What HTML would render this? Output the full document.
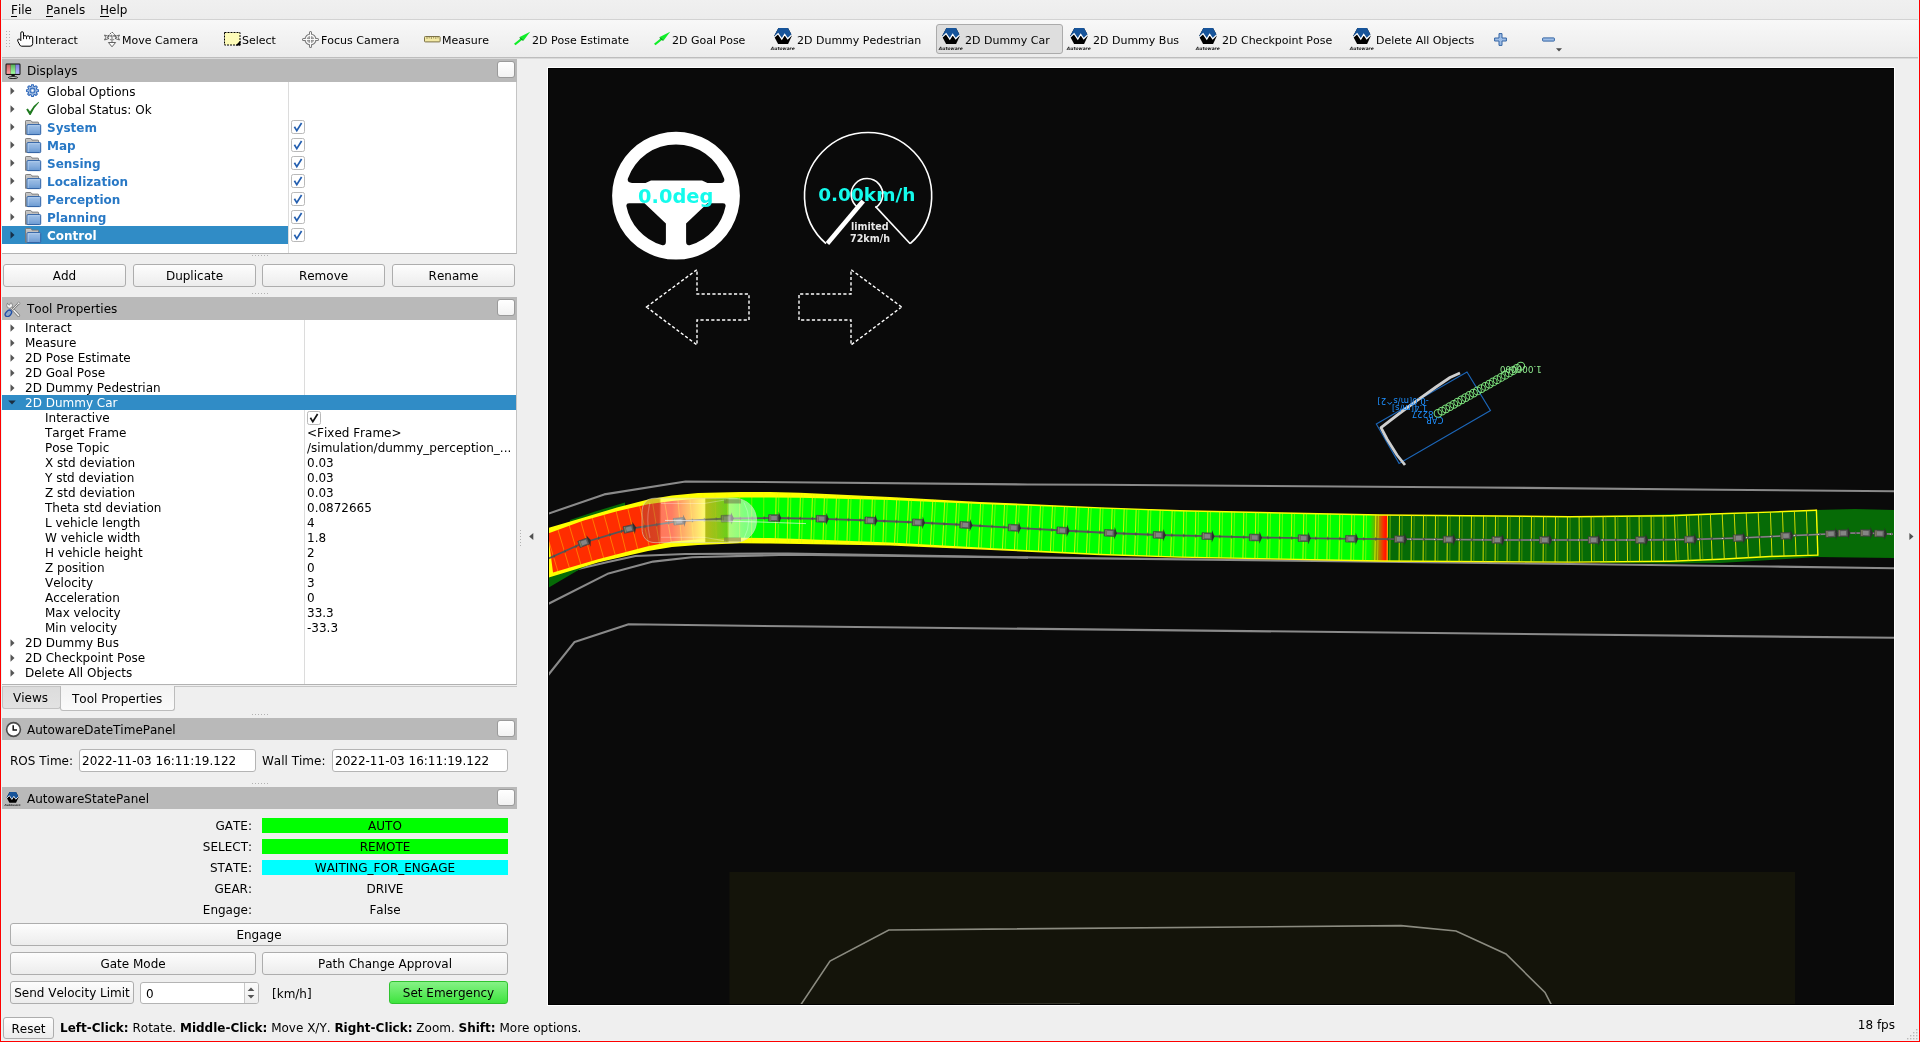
<!DOCTYPE html>
<html lang="en"><head><meta charset="utf-8"><title>RViz</title>
<style>
*{box-sizing:border-box;margin:0;padding:0}
html,body{width:1920px;height:1042px;overflow:hidden}
body{position:relative;background:#efefef;font-family:"DejaVu Sans","Liberation Sans",sans-serif;font-size:12px;font-kerning:none;color:#000;line-height:15px}
.abs,.abs>*{position:absolute}
#root{position:absolute;left:0;top:0;width:1920px;height:1042px;overflow:hidden;will-change:transform}
#root div,#root span,#root svg{position:absolute;white-space:nowrap}
.t{height:15px;line-height:15px}
.btn{border:1px solid #adadad;border-radius:3px;background:linear-gradient(#fdfdfd,#ececec);text-align:center}
.title{background:#b9b9b9;height:23px}
.float{width:17px;height:17px;border:1px solid #9a9a9a;border-radius:3px;background:linear-gradient(#ffffff,#f2f2f2)}
.tree{background:#fff;border-right:1px solid #c4c4c4;border-bottom:1px solid #b2b2b2}
.bold{font-weight:bold}
.tb{font-size:11px}
.blue{color:#2878c5}
.cb{width:13px;height:13px;border:1px solid #b5b5b5;border-radius:2px;background:#fff}
.inp{background:#fff;border:1px solid #b4b4b4;border-radius:3px}
.grip{width:16px;height:1px;background-image:repeating-linear-gradient(90deg,#b2b2b2 0 1px,transparent 1px 3px)}
</style></head><body><div id="root">
<div class="" style="left:0px;top:0px;width:1920px;height:20px;background:linear-gradient(#f0f0f0,#ececec);border-bottom:1px solid #d2d2d2"></div>
<div class="t" style="left:11px;top:3px;">File</div>
<div class="" style="left:11px;top:16px;width:6px;height:1px;background:#000"></div>
<div class="t" style="left:46px;top:3px;">Panels</div>
<div class="" style="left:46px;top:16px;width:7px;height:1px;background:#000"></div>
<div class="t" style="left:100px;top:3px;">Help</div>
<div class="" style="left:100px;top:16px;width:9px;height:1px;background:#000"></div>
<div class="" style="left:0px;top:20px;width:1920px;height:38px;background:linear-gradient(#f8f8f8,#ececec);border-bottom:1px solid #bdbdbd"></div>
<div class="" style="left:0px;top:58px;width:1920px;height:1px;background:#dadada"></div>
<div class="" style="left:5px;top:30px;width:6px;height:18px;background-image:radial-gradient(circle at 1.5px 1.5px,#b4b4b4 0.7px,transparent 1px);background-size:3px 3px"></div>
<div class="" style="left:936px;top:24px;width:127px;height:30px;background:#dedede;border:1px solid #ababab;border-radius:3px"></div>
<div class="t tb" style="left:35px;top:33px;">Interact</div>
<div class="t tb" style="left:122px;top:33px;">Move Camera</div>
<div class="t tb" style="left:242px;top:33px;">Select</div>
<div class="t tb" style="left:321px;top:33px;">Focus Camera</div>
<div class="t tb" style="left:442px;top:33px;">Measure</div>
<div class="t tb" style="left:532px;top:33px;">2D Pose Estimate</div>
<div class="t tb" style="left:672px;top:33px;">2D Goal Pose</div>
<div class="t tb" style="left:797px;top:33px;">2D Dummy Pedestrian</div>
<div class="t tb" style="left:965px;top:33px;">2D Dummy Car</div>
<div class="t tb" style="left:1093px;top:33px;">2D Dummy Bus</div>
<div class="t tb" style="left:1222px;top:33px;">2D Checkpoint Pose</div>
<div class="t tb" style="left:1376px;top:33px;">Delete All Objects</div>
<svg style="left:16px;top:30px" width="18" height="18" viewBox="-1 -1 18 18"><path d="M3.8 9.6 V1.8 Q3.8 0.8 5.15 0.8 Q6.5 0.8 6.5 1.8 V5.2 Q6.6 4.7 8 4.7 Q9.5 4.7 9.5 5.6 Q9.6 4.9 11 4.9 Q12.6 4.9 12.6 6 Q12.7 5.3 14.1 5.3 Q15.7 5.3 15.7 6.8 V12.5 Q15.7 15.2 13.2 15.2 H4.7 Q3.4 15.2 2.8 14 L0.9 10.3 Q0.2 8.6 1.4 8 Q2.7 7.5 3.8 9.6 Z" fill="#fff" stroke="#000" stroke-width="1" stroke-linejoin="round"/><path d="M6.5 5.2 V8.2 M9.5 5.6 V8.2 M12.6 6 V8.2" stroke="#000" stroke-width="0.9" fill="none"/></svg>
<svg style="left:104px;top:31px" width="17" height="17" viewBox="0 0 17 17"><g stroke="#5a5a5a" stroke-width="0.95" stroke-linejoin="miter"><rect x="7" y="5" width="2" height="7" fill="#b4b4b4" stroke="none"/><path d="M8 1 L12 5 H4 Z" fill="#fdfdfd" stroke-dasharray="2.4 0.8"/><path d="M0.5 4 L4.8 5.5 L3.5 6.5 L4.8 7.5 L0.5 9 L1.8 6.5 Z" fill="#fdfdfd"/><path d="M15.5 4 L11.2 5.5 L12.5 6.5 L11.2 7.5 L15.5 9 L14.2 6.5 Z" fill="#fdfdfd"/><ellipse cx="8" cy="6.5" rx="4" ry="2.3" fill="none" stroke-width="0.9" stroke-dasharray="1.6 1.1"/><path d="M4.4 11.5 H11.6 L8 15.8 Z" fill="#fdfdfd"/></g></svg>
<svg style="left:224px;top:32px" width="17" height="14" viewBox="0 0 17 14"><rect x="0.5" y="0.5" width="15.5" height="12.5" fill="#fdfbb8" stroke="#000" stroke-width="1" stroke-dasharray="2 1"/><path d="M16.5 8.6 V13.5 H11.6 Z" fill="#000"/></svg>
<svg style="left:301px;top:30px" width="19" height="19" viewBox="-9.5 -9.5 19 19"><path d="M0 -7 V7 M-7 0 H7" stroke="#787878" stroke-width="3" stroke-linecap="round" fill="none"/><circle r="5.5" fill="#f6f6f6" stroke="#787878" stroke-width="1.1"/><circle r="3.3" fill="#6e6e6e"/><path d="M0 -7.4 V7.4 M-7.4 0 H7.4" stroke="#fafafa" stroke-width="1" fill="none"/><path d="M-1.7 -3 V3 M1.7 -3 V3 M-3 -1.7 H3 M-3 1.7 H3" stroke="#d8d8d8" stroke-width="0.5" fill="none"/></svg>
<svg style="left:424px;top:36px" width="17" height="7" viewBox="0 0 17 7"><rect x="0.5" y="0.5" width="15.6" height="5.4" rx="0.8" fill="#f3e9a4" stroke="#7c7248" stroke-width="1"/><path d="M3 1 V3 M5.2 1 V2.4 M7.4 1 V3 M9.6 1 V2.4 M11.8 1 V3 M14 1 V2.4" stroke="#7c7248" stroke-width="0.7"/></svg>
<svg style="left:514px;top:31px" width="18" height="17" viewBox="0 0 18 17"><path d="M0 12.8 L1.5 14.3 L8.3 8.7 L9.6 9.4 L16.2 0.8 L5.7 6.1 L6.8 7.2 Z" fill="#10ee28"/><path d="M5.7 6.1 L9.6 9.4 L8.8 9.8 L5.6 7 Z" fill="#0a7a18"/></svg>
<svg style="left:654px;top:31px" width="18" height="17" viewBox="0 0 18 17"><path d="M0 12.8 L1.5 14.3 L8.3 8.7 L9.6 9.4 L16.2 0.8 L5.7 6.1 L6.8 7.2 Z" fill="#10ee28"/><path d="M5.7 6.1 L9.6 9.4 L8.8 9.8 L5.6 7 Z" fill="#0a7a18"/></svg>
<svg style="left:770.00px;top:28px" width="26.00" height="24" viewBox="-2 0 26 24"><path d="M6.4 0 H16 L20 7.4 L16.1 16 H6.1 L2 8.3 Z" fill="#000"/><path d="M6.4 0 H16 L20 7.4 L19.7 6.9 L15.7 10.9 L12.7 6.6 L9.8 11.2 L6.1 5.7 L2.3 9 L2 8.3 Z" fill="#17549a"/><path d="M2 9.4 L6.1 5.6 L9.8 11.1 L12.7 6.5 L15.7 10.8 L20 6.6" fill="none" stroke="#fff" stroke-width="1.25" stroke-linejoin="miter"/><text x="-1.2" y="21.7" font-family="DejaVu Sans,Liberation Sans,sans-serif" font-style="italic" font-weight="bold" font-size="4.4" textLength="24" lengthAdjust="spacingAndGlyphs" fill="#1a1a1a">Autoware</text></svg>
<svg style="left:938.00px;top:28px" width="26.00" height="24" viewBox="-2 0 26 24"><path d="M6.4 0 H16 L20 7.4 L16.1 16 H6.1 L2 8.3 Z" fill="#000"/><path d="M6.4 0 H16 L20 7.4 L19.7 6.9 L15.7 10.9 L12.7 6.6 L9.8 11.2 L6.1 5.7 L2.3 9 L2 8.3 Z" fill="#17549a"/><path d="M2 9.4 L6.1 5.6 L9.8 11.1 L12.7 6.5 L15.7 10.8 L20 6.6" fill="none" stroke="#fff" stroke-width="1.25" stroke-linejoin="miter"/><text x="-1.2" y="21.7" font-family="DejaVu Sans,Liberation Sans,sans-serif" font-style="italic" font-weight="bold" font-size="4.4" textLength="24" lengthAdjust="spacingAndGlyphs" fill="#1a1a1a">Autoware</text></svg>
<svg style="left:1066.00px;top:28px" width="26.00" height="24" viewBox="-2 0 26 24"><path d="M6.4 0 H16 L20 7.4 L16.1 16 H6.1 L2 8.3 Z" fill="#000"/><path d="M6.4 0 H16 L20 7.4 L19.7 6.9 L15.7 10.9 L12.7 6.6 L9.8 11.2 L6.1 5.7 L2.3 9 L2 8.3 Z" fill="#17549a"/><path d="M2 9.4 L6.1 5.6 L9.8 11.1 L12.7 6.5 L15.7 10.8 L20 6.6" fill="none" stroke="#fff" stroke-width="1.25" stroke-linejoin="miter"/><text x="-1.2" y="21.7" font-family="DejaVu Sans,Liberation Sans,sans-serif" font-style="italic" font-weight="bold" font-size="4.4" textLength="24" lengthAdjust="spacingAndGlyphs" fill="#1a1a1a">Autoware</text></svg>
<svg style="left:1195.00px;top:28px" width="26.00" height="24" viewBox="-2 0 26 24"><path d="M6.4 0 H16 L20 7.4 L16.1 16 H6.1 L2 8.3 Z" fill="#000"/><path d="M6.4 0 H16 L20 7.4 L19.7 6.9 L15.7 10.9 L12.7 6.6 L9.8 11.2 L6.1 5.7 L2.3 9 L2 8.3 Z" fill="#17549a"/><path d="M2 9.4 L6.1 5.6 L9.8 11.1 L12.7 6.5 L15.7 10.8 L20 6.6" fill="none" stroke="#fff" stroke-width="1.25" stroke-linejoin="miter"/><text x="-1.2" y="21.7" font-family="DejaVu Sans,Liberation Sans,sans-serif" font-style="italic" font-weight="bold" font-size="4.4" textLength="24" lengthAdjust="spacingAndGlyphs" fill="#1a1a1a">Autoware</text></svg>
<svg style="left:1349.00px;top:28px" width="26.00" height="24" viewBox="-2 0 26 24"><path d="M6.4 0 H16 L20 7.4 L16.1 16 H6.1 L2 8.3 Z" fill="#000"/><path d="M6.4 0 H16 L20 7.4 L19.7 6.9 L15.7 10.9 L12.7 6.6 L9.8 11.2 L6.1 5.7 L2.3 9 L2 8.3 Z" fill="#17549a"/><path d="M2 9.4 L6.1 5.6 L9.8 11.1 L12.7 6.5 L15.7 10.8 L20 6.6" fill="none" stroke="#fff" stroke-width="1.25" stroke-linejoin="miter"/><text x="-1.2" y="21.7" font-family="DejaVu Sans,Liberation Sans,sans-serif" font-style="italic" font-weight="bold" font-size="4.4" textLength="24" lengthAdjust="spacingAndGlyphs" fill="#1a1a1a">Autoware</text></svg>
<svg style="left:1494px;top:33px" width="13" height="13" viewBox="0 0 13 13"><path d="M5 0.6 H8 V5 H12.4 V8 H8 V12.4 H5 V8 H0.6 V5 H5 Z" fill="#9dbde6" stroke="#3465a4" stroke-width="1" stroke-linejoin="round"/></svg>
<svg style="left:1542px;top:37px" width="13" height="5" viewBox="0 0 13 5"><rect x="0.6" y="0.9" width="11.8" height="3.2" rx="0.6" fill="#9dbde6" stroke="#3465a4" stroke-width="1"/></svg>
<svg style="left:1556px;top:48px" width="6" height="4" viewBox="0 0 6 4"><path d="M0 0.3 H6 L3 3.6 Z" fill="#4a4a4a"/></svg>
<div class="title" style="left:2px;top:59px;width:515px;height:23px;"></div>
<svg style="left:5px;top:63px" width="16" height="16" viewBox="0 0 16 16"><defs><linearGradient id="mr" x1="0" y1="0" x2="0" y2="1"><stop offset="0" stop-color="#c46060"/><stop offset="1" stop-color="#ffa0a0"/></linearGradient><linearGradient id="mg" x1="0" y1="0" x2="0" y2="1"><stop offset="0" stop-color="#58b058"/><stop offset="1" stop-color="#a4ffa4"/></linearGradient><linearGradient id="mb" x1="0" y1="0" x2="0" y2="1"><stop offset="0" stop-color="#7c7cdc"/><stop offset="1" stop-color="#b8b8ff"/></linearGradient></defs><rect x="0.5" y="0.5" width="15" height="11.4" rx="1.2" fill="#111"/><rect x="1.5" y="1.5" width="4.2" height="9.4" fill="url(#mr)"/><rect x="5.7" y="1.5" width="4.8" height="9.4" fill="url(#mg)"/><rect x="10.5" y="1.5" width="4" height="9.4" fill="url(#mb)"/><path d="M6.6 11.9 H9.6 L10 13.2 H6.2 Z" fill="#111"/><ellipse cx="8" cy="14.6" rx="4.6" ry="1" fill="#ddd" stroke="#111" stroke-width="0.9"/></svg>
<div class="t" style="left:27px;top:64px;">Displays</div>
<div class="float" style="left:497px;top:61px;width:18px;height:17px;"></div>
<div class="tree" style="left:2px;top:82px;width:515px;height:172px;"></div>
<div class="" style="left:288px;top:82px;width:1px;height:171px;background:#dcdcdc"></div>
<svg style="left:10px;top:87px" width="5" height="8" viewBox="0 0 5 8"><path d="M0.5 0.3 L4.5 4 L0.5 7.7 Z" fill="#555"/></svg>
<svg style="left:25px;top:83px" width="15" height="15" viewBox="-7.5 -7.6 15 15"><path d="M-1.20 -4.34 L-0.93 -5.93 L0.93 -5.93 L1.20 -4.34 L2.22 -3.92 L3.54 -4.85 L4.85 -3.54 L3.92 -2.22 L4.34 -1.20 L5.93 -0.93 L5.93 0.93 L4.34 1.20 L3.92 2.22 L4.85 3.54 L3.54 4.85 L2.22 3.92 L1.20 4.34 L0.93 5.93 L-0.93 5.93 L-1.20 4.34 L-2.22 3.92 L-3.54 4.85 L-4.85 3.54 L-3.92 2.22 L-4.34 1.20 L-5.93 0.93 L-5.93 -0.93 L-4.34 -1.20 L-3.92 -2.22 L-4.85 -3.54 L-3.54 -4.85 L-2.22 -3.92 Z" fill="#aac3e4" stroke="#2c66ba" stroke-width="1.05" stroke-linejoin="round"/><circle r="2.45" fill="#9ab8e0" stroke="#3a72c0" stroke-width="1.1"/><circle r="1.05" fill="#fff"/></svg>
<div class="t" style="left:47px;top:85px;">Global Options</div>
<svg style="left:10px;top:105px" width="5" height="8" viewBox="0 0 5 8"><path d="M0.5 0.3 L4.5 4 L0.5 7.7 Z" fill="#555"/></svg>
<svg style="left:25px;top:101px" width="15" height="15" viewBox="0 0 15 15"><path d="M1.2 8.6 L2.8 7.4 L5 10.4 Q8 4.6 13.6 0.8 L14 1.6 Q9 6.6 5.6 14 H4.6 Z" fill="#1f7a1f"/></svg>
<div class="t" style="left:47px;top:103px;">Global Status: Ok</div>
<svg style="left:10px;top:123px" width="5" height="8" viewBox="0 0 5 8"><path d="M0.5 0.3 L4.5 4 L0.5 7.7 Z" fill="#555"/></svg>
<svg style="left:25px;top:120px" width="17" height="16" viewBox="0 0 17 16"><defs><linearGradient id="fb" x1="0" y1="0" x2="0" y2="1"><stop offset="0" stop-color="#c8c8c8"/><stop offset="1" stop-color="#a2a2a2"/></linearGradient><linearGradient id="fg" x1="0" y1="0" x2="0" y2="1"><stop offset="0" stop-color="#9fc0e6"/><stop offset="0.5" stop-color="#8ab0de"/><stop offset="1" stop-color="#6a9ad2"/></linearGradient></defs><path d="M0.5 14.3 V1.2 Q0.5 0.5 1.2 0.5 H5.4 Q6.2 0.5 6.5 1.2 L6.9 2.1 H12.8 Q13.6 2.1 13.6 2.9 V14.3 Z" fill="url(#fb)" stroke="#777" stroke-width="0.9"/><rect x="2" y="4.6" width="13.7" height="10" rx="0.9" fill="url(#fg)" stroke="#2f62a6" stroke-width="1"/><path d="M3.1 14 V5.7 H14.6" fill="none" stroke="#c4daf2" stroke-opacity="0.8" stroke-width="0.8"/></svg>
<svg style="left:291px;top:120px" width="14" height="14" viewBox="0 0 14 14"><rect x="0.5" y="0.5" width="13" height="13" rx="1.8" fill="#fff" stroke="#b9b9b9"/><path d="M3.4 6.8 L5.8 10.6 L10.6 3" fill="none" stroke="#245fb0" stroke-width="1.7"/></svg>
<div class="t bold blue" style="left:47px;top:121px;">System</div>
<svg style="left:10px;top:141px" width="5" height="8" viewBox="0 0 5 8"><path d="M0.5 0.3 L4.5 4 L0.5 7.7 Z" fill="#555"/></svg>
<svg style="left:25px;top:138px" width="17" height="16" viewBox="0 0 17 16"><defs><linearGradient id="fb" x1="0" y1="0" x2="0" y2="1"><stop offset="0" stop-color="#c8c8c8"/><stop offset="1" stop-color="#a2a2a2"/></linearGradient><linearGradient id="fg" x1="0" y1="0" x2="0" y2="1"><stop offset="0" stop-color="#9fc0e6"/><stop offset="0.5" stop-color="#8ab0de"/><stop offset="1" stop-color="#6a9ad2"/></linearGradient></defs><path d="M0.5 14.3 V1.2 Q0.5 0.5 1.2 0.5 H5.4 Q6.2 0.5 6.5 1.2 L6.9 2.1 H12.8 Q13.6 2.1 13.6 2.9 V14.3 Z" fill="url(#fb)" stroke="#777" stroke-width="0.9"/><rect x="2" y="4.6" width="13.7" height="10" rx="0.9" fill="url(#fg)" stroke="#2f62a6" stroke-width="1"/><path d="M3.1 14 V5.7 H14.6" fill="none" stroke="#c4daf2" stroke-opacity="0.8" stroke-width="0.8"/></svg>
<svg style="left:291px;top:138px" width="14" height="14" viewBox="0 0 14 14"><rect x="0.5" y="0.5" width="13" height="13" rx="1.8" fill="#fff" stroke="#b9b9b9"/><path d="M3.4 6.8 L5.8 10.6 L10.6 3" fill="none" stroke="#245fb0" stroke-width="1.7"/></svg>
<div class="t bold blue" style="left:47px;top:139px;">Map</div>
<svg style="left:10px;top:159px" width="5" height="8" viewBox="0 0 5 8"><path d="M0.5 0.3 L4.5 4 L0.5 7.7 Z" fill="#555"/></svg>
<svg style="left:25px;top:156px" width="17" height="16" viewBox="0 0 17 16"><defs><linearGradient id="fb" x1="0" y1="0" x2="0" y2="1"><stop offset="0" stop-color="#c8c8c8"/><stop offset="1" stop-color="#a2a2a2"/></linearGradient><linearGradient id="fg" x1="0" y1="0" x2="0" y2="1"><stop offset="0" stop-color="#9fc0e6"/><stop offset="0.5" stop-color="#8ab0de"/><stop offset="1" stop-color="#6a9ad2"/></linearGradient></defs><path d="M0.5 14.3 V1.2 Q0.5 0.5 1.2 0.5 H5.4 Q6.2 0.5 6.5 1.2 L6.9 2.1 H12.8 Q13.6 2.1 13.6 2.9 V14.3 Z" fill="url(#fb)" stroke="#777" stroke-width="0.9"/><rect x="2" y="4.6" width="13.7" height="10" rx="0.9" fill="url(#fg)" stroke="#2f62a6" stroke-width="1"/><path d="M3.1 14 V5.7 H14.6" fill="none" stroke="#c4daf2" stroke-opacity="0.8" stroke-width="0.8"/></svg>
<svg style="left:291px;top:156px" width="14" height="14" viewBox="0 0 14 14"><rect x="0.5" y="0.5" width="13" height="13" rx="1.8" fill="#fff" stroke="#b9b9b9"/><path d="M3.4 6.8 L5.8 10.6 L10.6 3" fill="none" stroke="#245fb0" stroke-width="1.7"/></svg>
<div class="t bold blue" style="left:47px;top:157px;">Sensing</div>
<svg style="left:10px;top:177px" width="5" height="8" viewBox="0 0 5 8"><path d="M0.5 0.3 L4.5 4 L0.5 7.7 Z" fill="#555"/></svg>
<svg style="left:25px;top:174px" width="17" height="16" viewBox="0 0 17 16"><defs><linearGradient id="fb" x1="0" y1="0" x2="0" y2="1"><stop offset="0" stop-color="#c8c8c8"/><stop offset="1" stop-color="#a2a2a2"/></linearGradient><linearGradient id="fg" x1="0" y1="0" x2="0" y2="1"><stop offset="0" stop-color="#9fc0e6"/><stop offset="0.5" stop-color="#8ab0de"/><stop offset="1" stop-color="#6a9ad2"/></linearGradient></defs><path d="M0.5 14.3 V1.2 Q0.5 0.5 1.2 0.5 H5.4 Q6.2 0.5 6.5 1.2 L6.9 2.1 H12.8 Q13.6 2.1 13.6 2.9 V14.3 Z" fill="url(#fb)" stroke="#777" stroke-width="0.9"/><rect x="2" y="4.6" width="13.7" height="10" rx="0.9" fill="url(#fg)" stroke="#2f62a6" stroke-width="1"/><path d="M3.1 14 V5.7 H14.6" fill="none" stroke="#c4daf2" stroke-opacity="0.8" stroke-width="0.8"/></svg>
<svg style="left:291px;top:174px" width="14" height="14" viewBox="0 0 14 14"><rect x="0.5" y="0.5" width="13" height="13" rx="1.8" fill="#fff" stroke="#b9b9b9"/><path d="M3.4 6.8 L5.8 10.6 L10.6 3" fill="none" stroke="#245fb0" stroke-width="1.7"/></svg>
<div class="t bold blue" style="left:47px;top:175px;">Localization</div>
<svg style="left:10px;top:195px" width="5" height="8" viewBox="0 0 5 8"><path d="M0.5 0.3 L4.5 4 L0.5 7.7 Z" fill="#555"/></svg>
<svg style="left:25px;top:192px" width="17" height="16" viewBox="0 0 17 16"><defs><linearGradient id="fb" x1="0" y1="0" x2="0" y2="1"><stop offset="0" stop-color="#c8c8c8"/><stop offset="1" stop-color="#a2a2a2"/></linearGradient><linearGradient id="fg" x1="0" y1="0" x2="0" y2="1"><stop offset="0" stop-color="#9fc0e6"/><stop offset="0.5" stop-color="#8ab0de"/><stop offset="1" stop-color="#6a9ad2"/></linearGradient></defs><path d="M0.5 14.3 V1.2 Q0.5 0.5 1.2 0.5 H5.4 Q6.2 0.5 6.5 1.2 L6.9 2.1 H12.8 Q13.6 2.1 13.6 2.9 V14.3 Z" fill="url(#fb)" stroke="#777" stroke-width="0.9"/><rect x="2" y="4.6" width="13.7" height="10" rx="0.9" fill="url(#fg)" stroke="#2f62a6" stroke-width="1"/><path d="M3.1 14 V5.7 H14.6" fill="none" stroke="#c4daf2" stroke-opacity="0.8" stroke-width="0.8"/></svg>
<svg style="left:291px;top:192px" width="14" height="14" viewBox="0 0 14 14"><rect x="0.5" y="0.5" width="13" height="13" rx="1.8" fill="#fff" stroke="#b9b9b9"/><path d="M3.4 6.8 L5.8 10.6 L10.6 3" fill="none" stroke="#245fb0" stroke-width="1.7"/></svg>
<div class="t bold blue" style="left:47px;top:193px;">Perception</div>
<svg style="left:10px;top:213px" width="5" height="8" viewBox="0 0 5 8"><path d="M0.5 0.3 L4.5 4 L0.5 7.7 Z" fill="#555"/></svg>
<svg style="left:25px;top:210px" width="17" height="16" viewBox="0 0 17 16"><defs><linearGradient id="fb" x1="0" y1="0" x2="0" y2="1"><stop offset="0" stop-color="#c8c8c8"/><stop offset="1" stop-color="#a2a2a2"/></linearGradient><linearGradient id="fg" x1="0" y1="0" x2="0" y2="1"><stop offset="0" stop-color="#9fc0e6"/><stop offset="0.5" stop-color="#8ab0de"/><stop offset="1" stop-color="#6a9ad2"/></linearGradient></defs><path d="M0.5 14.3 V1.2 Q0.5 0.5 1.2 0.5 H5.4 Q6.2 0.5 6.5 1.2 L6.9 2.1 H12.8 Q13.6 2.1 13.6 2.9 V14.3 Z" fill="url(#fb)" stroke="#777" stroke-width="0.9"/><rect x="2" y="4.6" width="13.7" height="10" rx="0.9" fill="url(#fg)" stroke="#2f62a6" stroke-width="1"/><path d="M3.1 14 V5.7 H14.6" fill="none" stroke="#c4daf2" stroke-opacity="0.8" stroke-width="0.8"/></svg>
<svg style="left:291px;top:210px" width="14" height="14" viewBox="0 0 14 14"><rect x="0.5" y="0.5" width="13" height="13" rx="1.8" fill="#fff" stroke="#b9b9b9"/><path d="M3.4 6.8 L5.8 10.6 L10.6 3" fill="none" stroke="#245fb0" stroke-width="1.7"/></svg>
<div class="t bold blue" style="left:47px;top:211px;">Planning</div>
<div class="" style="left:2px;top:226px;width:286px;height:18px;background:#308cc6"></div>
<svg style="left:10px;top:231px" width="5" height="8" viewBox="0 0 5 8"><path d="M0.5 0.3 L4.5 4 L0.5 7.7 Z" fill="#16304a"/></svg>
<svg style="left:25px;top:228px" width="17" height="16" viewBox="0 0 17 16"><defs><linearGradient id="fb" x1="0" y1="0" x2="0" y2="1"><stop offset="0" stop-color="#c8c8c8"/><stop offset="1" stop-color="#a2a2a2"/></linearGradient><linearGradient id="fg" x1="0" y1="0" x2="0" y2="1"><stop offset="0" stop-color="#9fc0e6"/><stop offset="0.5" stop-color="#8ab0de"/><stop offset="1" stop-color="#6a9ad2"/></linearGradient></defs><path d="M0.5 14.3 V1.2 Q0.5 0.5 1.2 0.5 H5.4 Q6.2 0.5 6.5 1.2 L6.9 2.1 H12.8 Q13.6 2.1 13.6 2.9 V14.3 Z" fill="url(#fb)" stroke="#777" stroke-width="0.9"/><rect x="2" y="4.6" width="13.7" height="10" rx="0.9" fill="url(#fg)" stroke="#2f62a6" stroke-width="1"/><path d="M3.1 14 V5.7 H14.6" fill="none" stroke="#c4daf2" stroke-opacity="0.8" stroke-width="0.8"/></svg>
<svg style="left:291px;top:228px" width="14" height="14" viewBox="0 0 14 14"><rect x="0.5" y="0.5" width="13" height="13" rx="1.8" fill="#fff" stroke="#b9b9b9"/><path d="M3.4 6.8 L5.8 10.6 L10.6 3" fill="none" stroke="#245fb0" stroke-width="1.7"/></svg>
<div class="t bold" style="left:47px;top:229px;color:#fff">Control</div>
<div class="grip" style="left:252px;top:255px;width:16px;height:1px;"></div>
<div class="btn" style="left:3px;top:264px;width:123px;height:23px;"></div>
<div class="t" style="left:3px;width:123px;text-align:center;top:269px;">Add</div>
<div class="btn" style="left:133px;top:264px;width:123px;height:23px;"></div>
<div class="t" style="left:133px;width:123px;text-align:center;top:269px;">Duplicate</div>
<div class="btn" style="left:262px;top:264px;width:123px;height:23px;"></div>
<div class="t" style="left:262px;width:123px;text-align:center;top:269px;">Remove</div>
<div class="btn" style="left:392px;top:264px;width:123px;height:23px;"></div>
<div class="t" style="left:392px;width:123px;text-align:center;top:269px;">Rename</div>
<div class="grip" style="left:252px;top:293px;width:16px;height:1px;"></div>
<div class="title" style="left:2px;top:297px;width:515px;height:23px;"></div>
<svg style="left:4px;top:300px" width="17" height="17" viewBox="0 0 17 17"><path d="M6.2 6.4 L14.6 15.4" stroke="#7a7a7a" stroke-width="3" stroke-linecap="round"/><path d="M6.2 6.4 L14.6 15.4" stroke="#f2f2f2" stroke-width="1.5" stroke-linecap="round"/><circle cx="5.6" cy="5.4" r="2.9" fill="#f4f4f4" stroke="#7a7a7a" stroke-width="0.9"/><path d="M5.2 5 L2.4 0.8 L7.4 1 Z" fill="#b9b9b9"/><path d="M3.4 3.2 L5.3 5.3 L6.6 2.9" fill="none" stroke="#7a7a7a" stroke-width="0.8"/><path d="M14.6 3.4 L7.6 10.6" stroke="#7a7a7a" stroke-width="2.2" stroke-linecap="round"/><path d="M14.6 3.4 L7.6 10.6" stroke="#f4f4f4" stroke-width="0.9" stroke-linecap="round"/><circle cx="14.7" cy="3.3" r="1.2" fill="#f4f4f4" stroke="#7a7a7a" stroke-width="0.7"/><ellipse cx="4.4" cy="13.4" rx="3.7" ry="2.5" transform="rotate(-45 4.4 13.4)" fill="#8fa6c8" stroke="#2451a6" stroke-width="1.4"/></svg>
<div class="t" style="left:27px;top:302px;">Tool Properties</div>
<div class="float" style="left:497px;top:299px;width:18px;height:17px;"></div>
<div class="tree" style="left:2px;top:320px;width:515px;height:365px;"></div>
<div class="" style="left:304px;top:320px;width:1px;height:364px;background:#dcdcdc"></div>
<svg style="left:10px;top:324px" width="5" height="8" viewBox="0 0 5 8"><path d="M0.5 0.3 L4.5 4 L0.5 7.7 Z" fill="#555"/></svg>
<div class="t" style="left:25px;top:321px;">Interact</div>
<svg style="left:10px;top:339px" width="5" height="8" viewBox="0 0 5 8"><path d="M0.5 0.3 L4.5 4 L0.5 7.7 Z" fill="#555"/></svg>
<div class="t" style="left:25px;top:336px;">Measure</div>
<svg style="left:10px;top:354px" width="5" height="8" viewBox="0 0 5 8"><path d="M0.5 0.3 L4.5 4 L0.5 7.7 Z" fill="#555"/></svg>
<div class="t" style="left:25px;top:351px;">2D Pose Estimate</div>
<svg style="left:10px;top:369px" width="5" height="8" viewBox="0 0 5 8"><path d="M0.5 0.3 L4.5 4 L0.5 7.7 Z" fill="#555"/></svg>
<div class="t" style="left:25px;top:366px;">2D Goal Pose</div>
<svg style="left:10px;top:384px" width="5" height="8" viewBox="0 0 5 8"><path d="M0.5 0.3 L4.5 4 L0.5 7.7 Z" fill="#555"/></svg>
<div class="t" style="left:25px;top:381px;">2D Dummy Pedestrian</div>
<div class="" style="left:2px;top:395px;width:514px;height:15px;background:#308cc6"></div>
<svg style="left:8px;top:400px" width="8" height="5" viewBox="0 0 8 5"><path d="M0.3 0.5 L7.7 0.5 L4 4.5 Z" fill="#1b2e40"/></svg>
<div class="t" style="left:25px;top:396px;color:#fff">2D Dummy Car</div>
<div class="t" style="left:45px;top:411px;">Interactive</div>
<svg style="left:307px;top:411px" width="14" height="14" viewBox="0 0 14 14"><rect x="0.5" y="0.5" width="13" height="13" rx="1.8" fill="#fff" stroke="#b9b9b9"/><path d="M3.4 6.8 L5.8 10.6 L10.6 3" fill="none" stroke="#111" stroke-width="1.7"/></svg>
<div class="t" style="left:45px;top:426px;">Target Frame</div>
<div class="t" style="left:307px;top:426px;">&lt;Fixed Frame&gt;</div>
<div class="t" style="left:45px;top:441px;">Pose Topic</div>
<div class="t" style="left:307px;top:441px;">/simulation/dummy_perception_...</div>
<div class="t" style="left:45px;top:456px;">X std deviation</div>
<div class="t" style="left:307px;top:456px;">0.03</div>
<div class="t" style="left:45px;top:471px;">Y std deviation</div>
<div class="t" style="left:307px;top:471px;">0.03</div>
<div class="t" style="left:45px;top:486px;">Z std deviation</div>
<div class="t" style="left:307px;top:486px;">0.03</div>
<div class="t" style="left:45px;top:501px;">Theta std deviation</div>
<div class="t" style="left:307px;top:501px;">0.0872665</div>
<div class="t" style="left:45px;top:516px;">L vehicle length</div>
<div class="t" style="left:307px;top:516px;">4</div>
<div class="t" style="left:45px;top:531px;">W vehicle width</div>
<div class="t" style="left:307px;top:531px;">1.8</div>
<div class="t" style="left:45px;top:546px;">H vehicle height</div>
<div class="t" style="left:307px;top:546px;">2</div>
<div class="t" style="left:45px;top:561px;">Z position</div>
<div class="t" style="left:307px;top:561px;">0</div>
<div class="t" style="left:45px;top:576px;">Velocity</div>
<div class="t" style="left:307px;top:576px;">3</div>
<div class="t" style="left:45px;top:591px;">Acceleration</div>
<div class="t" style="left:307px;top:591px;">0</div>
<div class="t" style="left:45px;top:606px;">Max velocity</div>
<div class="t" style="left:307px;top:606px;">33.3</div>
<div class="t" style="left:45px;top:621px;">Min velocity</div>
<div class="t" style="left:307px;top:621px;">-33.3</div>
<svg style="left:10px;top:639px" width="5" height="8" viewBox="0 0 5 8"><path d="M0.5 0.3 L4.5 4 L0.5 7.7 Z" fill="#555"/></svg>
<div class="t" style="left:25px;top:636px;">2D Dummy Bus</div>
<svg style="left:10px;top:654px" width="5" height="8" viewBox="0 0 5 8"><path d="M0.5 0.3 L4.5 4 L0.5 7.7 Z" fill="#555"/></svg>
<div class="t" style="left:25px;top:651px;">2D Checkpoint Pose</div>
<svg style="left:10px;top:669px" width="5" height="8" viewBox="0 0 5 8"><path d="M0.5 0.3 L4.5 4 L0.5 7.7 Z" fill="#555"/></svg>
<div class="t" style="left:25px;top:666px;">Delete All Objects</div>
<div class="" style="left:2px;top:686px;width:515px;height:1px;background:#c6c6c6"></div>
<div class="" style="left:2px;top:687px;width:59px;height:22px;background:linear-gradient(#dcdcdc,#e2e2e2);border:1px solid #c2c2c2;border-top:none;border-radius:0 0 3px 3px"></div>
<div class="t" style="left:13px;top:691px;">Views</div>
<div class="" style="left:60px;top:686px;width:115px;height:25px;background:linear-gradient(#f3f3f3,#fafafa);border:1px solid #bcbcbc;border-top:none;border-radius:0 0 3px 3px"></div>
<div class="t" style="left:72px;top:692px;">Tool Properties</div>
<div class="grip" style="left:252px;top:714px;width:16px;height:1px;"></div>
<div class="title" style="left:2px;top:718px;width:515px;height:22px;"></div>
<svg style="left:4.5px;top:721px" width="17" height="17" viewBox="0 0 17 17"><circle cx="8.5" cy="8.5" r="6.9" fill="#fff" stroke="#4a4a4a" stroke-width="1.6"/><path d="M8.2 4.2 V9 H12" fill="none" stroke="#111" stroke-width="1.5"/></svg>
<div class="t" style="left:27px;top:723px;">AutowareDateTimePanel</div>
<div class="float" style="left:497px;top:720px;width:18px;height:17px;"></div>
<div class="t" style="left:10px;top:754px;">ROS Time:</div>
<div class="inp" style="left:79px;top:749px;width:177px;height:23px;"></div>
<div class="t" style="left:82px;top:754px;">2022-11-03 16:11:19.122</div>
<div class="t" style="left:262px;top:754px;">Wall Time:</div>
<div class="inp" style="left:332px;top:749px;width:176px;height:23px;"></div>
<div class="t" style="left:335px;top:754px;">2022-11-03 16:11:19.122</div>
<div class="grip" style="left:252px;top:783px;width:16px;height:1px;"></div>
<div class="title" style="left:2px;top:787px;width:515px;height:22px;"></div>
<svg style="left:4.17px;top:792px" width="17.33" height="16" viewBox="-2 0 26 24"><path d="M6.4 0 H16 L20 7.4 L16.1 16 H6.1 L2 8.3 Z" fill="#000"/><path d="M6.4 0 H16 L20 7.4 L19.7 6.9 L15.7 10.9 L12.7 6.6 L9.8 11.2 L6.1 5.7 L2.3 9 L2 8.3 Z" fill="#17549a"/><path d="M2 9.4 L6.1 5.6 L9.8 11.1 L12.7 6.5 L15.7 10.8 L20 6.6" fill="none" stroke="#fff" stroke-width="1.25" stroke-linejoin="miter"/><text x="-1.2" y="21.7" font-family="DejaVu Sans,Liberation Sans,sans-serif" font-style="italic" font-weight="bold" font-size="4.4" textLength="24" lengthAdjust="spacingAndGlyphs" fill="#1a1a1a">Autoware</text></svg>
<div class="t" style="left:27px;top:792px;">AutowareStatePanel</div>
<div class="float" style="left:497px;top:789px;width:18px;height:17px;"></div>
<div class="t" style="right:1668px;top:819px">GATE:</div>
<div class="" style="left:262px;top:818px;width:246px;height:15px;background:#00ff00"></div>
<div class="t" style="left:262px;width:246px;text-align:center;top:819px;">AUTO</div>
<div class="t" style="right:1668px;top:840px">SELECT:</div>
<div class="" style="left:262px;top:839px;width:246px;height:15px;background:#00ff00"></div>
<div class="t" style="left:262px;width:246px;text-align:center;top:840px;">REMOTE</div>
<div class="t" style="right:1668px;top:861px">STATE:</div>
<div class="" style="left:262px;top:860px;width:246px;height:15px;background:#00ffff"></div>
<div class="t" style="left:262px;width:246px;text-align:center;top:861px;">WAITING_FOR_ENGAGE</div>
<div class="t" style="right:1668px;top:882px">GEAR:</div>
<div class="t" style="left:262px;width:246px;text-align:center;top:882px;">DRIVE</div>
<div class="t" style="right:1668px;top:903px">Engage:</div>
<div class="t" style="left:262px;width:246px;text-align:center;top:903px;">False</div>
<div class="btn" style="left:10px;top:923px;width:498px;height:23px;"></div>
<div class="t" style="left:10px;width:498px;text-align:center;top:928px;">Engage</div>
<div class="btn" style="left:10px;top:952px;width:246px;height:23px;"></div>
<div class="t" style="left:10px;width:246px;text-align:center;top:957px;">Gate Mode</div>
<div class="btn" style="left:262px;top:952px;width:246px;height:23px;"></div>
<div class="t" style="left:262px;width:246px;text-align:center;top:957px;">Path Change Approval</div>
<div class="btn" style="left:10px;top:981px;width:124px;height:23px;"></div>
<div class="t" style="left:10px;width:124px;text-align:center;top:986px;">Send Velocity Limit</div>
<div class="inp" style="left:140px;top:982px;width:119px;height:22px;"></div>
<div class="" style="left:244px;top:983px;width:14px;height:20px;border-left:1px solid #c8c8c8;background:linear-gradient(#fbfbfb,#eeeeee);border-radius:0 2px 2px 0"></div>
<svg style="left:247px;top:986px" width="8" height="14" viewBox="0 0 8 14"><path d="M0.6 5 L4 1.4 L7.4 5 Z M0.6 9 L4 12.6 L7.4 9 Z" fill="#555"/></svg>
<div class="t" style="left:146px;top:987px;">0</div>
<div class="t" style="left:272px;top:987px;">[km/h]</div>
<div class="btn" style="left:389px;top:981px;width:119px;height:23px;background:linear-gradient(#86f286,#3ee43e);border-color:#2fc32f"></div>
<div class="t" style="left:389px;width:119px;text-align:center;top:986px;">Set Emergency</div>
<svg style="left:548px;top:68px" width="1346" height="937" viewBox="548 68 1346 937" font-family="DejaVu Sans,Liberation Sans,sans-serif">
<defs><linearGradient id="pg" gradientUnits="userSpaceOnUse" x1="548" y1="0" x2="1816" y2="0"><stop offset="0.00000" stop-color="#ff2d00"/><stop offset="0.09779" stop-color="#ff2d00"/><stop offset="0.12224" stop-color="#ffee00"/><stop offset="0.15536" stop-color="#00ff00"/><stop offset="0.64748" stop-color="#00ff00"/><stop offset="0.65221" stop-color="#70b000"/><stop offset="0.65615" stop-color="#c07000"/><stop offset="0.65891" stop-color="#ff2800"/><stop offset="0.66246" stop-color="#ff0000"/><stop offset="0.66254" stop-color="#066b06"/><stop offset="1.00000" stop-color="#066b06"/></linearGradient></defs>
<rect x="548" y="68" width="1346" height="937" fill="#0a0a0a"/>
<rect x="729.5" y="872" width="1065.5" height="134" fill="#14140a"/>
<polyline points="800.0,1006.0 830.0,961.0 888.8,930.0 1401.0,925.6 1456.0,931.0 1506.0,954.0 1545.0,992.5 1552.0,1006.0" fill="none" stroke="#8b8b80" stroke-width="1.6"/>
<path d="M945 1004.6 L1080 1004.2" stroke="#6a6a60" stroke-width="1.2"/>
<polyline points="548.0,513.8 604.2,494.4 685.5,481.5 788.0,482.2 1028.0,484.5 1100.0,484.8 1480.0,487.5 1720.0,489.7 1894.0,491.3" fill="none" stroke="#8a8a8a" stroke-width="2.1" stroke-linejoin="round"/>
<polyline points="548.0,576.0 608.0,562.0 635.5,556.0 685.5,554.0 788.0,553.5 1028.0,557.4 1100.0,558.4 1380.0,561.6 1570.0,564.0 1770.0,566.5 1894.0,568.3" fill="none" stroke="#8a8a8a" stroke-width="2.1" stroke-linejoin="round"/>
<polyline points="548.0,604.0 608.5,573.4 653.1,561.6 692.0,557.3 788.0,554.8 900.0,556.0 1028.0,557.6" fill="none" stroke="#8a8a8a" stroke-width="2.1" stroke-linejoin="round"/>
<polyline points="548.0,675.3 574.6,641.9 628.6,624.2 788.0,626.3 1894.0,637.8" fill="none" stroke="#8a8a8a" stroke-width="2.1" stroke-linejoin="round"/>
<polygon points="548.0,556.0 548.0,588.0 581.0,568.5 600.0,560.0 560.0,560.0" fill="#066b06"/>
<polygon points="570.0,520.0 596.0,511.2 625.0,502.6 625.0,506.0 570.0,523.0" fill="#066b06"/>
<polygon points="1600.0,516.0 1740.0,512.5 1816.0,510.0 1855.0,509.0 1894.0,510.0 1894.0,558.0 1855.0,557.4 1817.0,557.0 1770.0,560.0 1720.0,563.0 1660.0,563.5 1600.0,563.0" fill="#066b06"/>
<polygon points="548.0,528.0 583.0,517.8 617.0,507.5 648.0,499.5 672.0,495.5 698.0,493.0 740.0,492.0 770.0,491.9 800.0,492.8 890.0,496.9 980.0,501.9 1100.0,507.2 1180.0,510.1 1380.0,514.3 1570.0,516.0 1670.0,515.0 1720.0,513.1 1770.0,511.4 1816.4,509.5 1817.9,555.8 1770.0,557.2 1720.0,560.0 1670.0,561.9 1570.0,562.8 1380.0,561.7 1180.0,557.8 1100.0,555.2 980.0,549.6 890.0,545.6 800.0,543.9 770.0,543.6 740.0,543.2 698.0,545.0 672.0,547.0 648.0,551.0 598.0,562.5 548.0,577.8" fill="#ffff00"/>
<polygon points="548.0,533.5 583.0,520.7 617.0,511.2 648.0,504.2 672.0,501.0 698.0,498.5 740.0,497.5 770.0,497.4 800.0,497.7 890.0,499.9 980.0,503.9 1100.0,508.6 1180.0,511.5 1380.0,515.7 1570.0,517.4 1670.0,516.4 1720.0,514.5 1770.0,512.8 1816.4,510.9 1817.9,554.4 1770.0,555.8 1720.0,558.6 1670.0,560.5 1570.0,561.4 1380.0,560.3 1180.0,556.4 1100.0,553.8 980.0,547.6 890.0,542.6 800.0,539.0 770.0,538.1 740.0,537.7 698.0,539.5 672.0,541.5 648.0,546.3 598.0,559.3 553.0,572.5" fill="url(#pg)"/>
<path d="M545.3 529.4 L558.7 574.1 M556.8 526.0 L570.2 570.5 M568.4 522.6 L581.6 567.0 M580.2 519.1 L592.8 563.8 M591.7 515.9 L604.4 560.5 M603.2 512.2 L616.0 557.6 M615.4 508.3 L626.9 555.3 M627.0 505.3 L638.6 552.6 M638.8 502.3 L650.1 550.0 M652.0 499.3 L660.2 548.5 M663.9 497.4 L672.1 546.5 M677.6 495.4 L682.0 545.7 M689.6 494.3 L693.9 544.8 M702.9 493.4 L704.6 544.2 M714.9 493.1 L716.5 543.7 M726.9 492.8 L728.5 543.2 M739.7 492.5 L739.6 542.7 M751.8 492.5 L751.6 542.9 M763.8 492.4 L763.6 543.0 " stroke="#ffee00" stroke-opacity="0.5" stroke-width="0.8" fill="none"/>
<path d="M776.2 492.6 L775.2 543.1 M788.2 492.9 L787.2 543.3 M800.5 493.3 L798.9 543.4 M812.5 493.9 L810.9 543.6 M824.5 494.4 L822.9 543.8 M836.5 495.0 L834.9 544.0 M848.4 495.5 L846.9 544.3 M860.4 496.0 L858.9 544.5 M872.4 496.6 L870.9 544.7 M884.4 497.1 L882.9 545.0 M896.8 497.8 L894.4 545.3 M908.8 498.4 L906.4 545.8 M920.8 499.1 L918.4 546.4 M932.8 499.8 L930.4 546.9 M944.8 500.4 L942.4 547.4 M956.7 501.1 L954.4 548.0 M968.7 501.8 L966.4 548.5 M980.6 502.4 L978.5 549.0 M992.6 503.0 L990.5 549.6 M1004.6 503.5 L1002.4 550.1 M1016.6 504.0 L1014.4 550.7 M1028.5 504.5 L1026.4 551.3 M1040.5 505.1 L1038.4 551.8 M1052.5 505.6 L1050.4 552.4 M1064.5 506.1 L1062.4 552.9 M1076.5 506.7 L1074.4 553.5 M1088.5 507.2 L1086.4 554.1 M1100.3 507.7 L1098.6 554.6 M1112.2 508.1 L1110.6 555.0 M1124.2 508.6 L1122.6 555.4 M1136.2 509.0 L1134.6 555.8 M1148.2 509.4 L1146.6 556.2 M1160.2 509.9 L1158.6 556.6 M1172.2 510.3 L1170.6 557.0 M1183.8 510.7 L1182.9 557.4 M1195.8 510.9 L1194.9 557.6 M1207.8 511.2 L1206.9 557.8 M1219.8 511.4 L1218.9 558.1 M1231.8 511.7 L1230.9 558.3 M1243.8 511.9 L1242.9 558.5 M1255.8 512.2 L1254.9 558.8 M1267.8 512.4 L1266.9 559.0 M1279.8 512.7 L1278.9 559.2 M1291.8 512.9 L1290.9 559.5 M1303.8 513.2 L1302.9 559.7 M1315.8 513.5 L1314.9 559.9 M1327.8 513.7 L1326.9 560.2 M1339.8 514.0 L1338.9 560.4 M1351.8 514.2 L1350.9 560.6 M1363.8 514.5 L1362.9 560.9 M1375.8 514.7 L1374.8 561.1 M1387.5 514.9 L1387.1 561.2 " stroke="#f6f600" stroke-opacity="0.9" stroke-width="0.9" fill="none"/>
<path d="M1399.5 515.0 L1399.1 561.3 M1411.5 515.1 L1411.1 561.4 M1423.5 515.2 L1423.1 561.4 M1435.5 515.3 L1435.1 561.5 M1447.5 515.4 L1447.1 561.6 M1459.5 515.5 L1459.1 561.7 M1471.5 515.6 L1471.1 561.7 M1483.5 515.7 L1483.1 561.8 M1495.5 515.8 L1495.1 561.9 M1507.5 515.9 L1507.1 561.9 M1519.5 516.0 L1519.1 562.0 M1531.5 516.2 L1531.1 562.1 M1543.5 516.3 L1543.1 562.1 M1555.5 516.4 L1555.1 562.2 M1567.4 516.5 L1567.3 562.3 M1579.1 516.4 L1579.5 562.2 M1591.1 516.3 L1591.5 562.1 M1603.1 516.2 L1603.5 562.0 M1615.1 516.0 L1615.5 561.9 M1627.1 515.9 L1627.5 561.8 M1639.1 515.8 L1639.5 561.7 M1651.1 515.7 L1651.5 561.6 M1663.1 515.6 L1663.5 561.5 M1674.4 515.3 L1676.2 561.2 M1686.4 514.9 L1688.2 560.7 M1698.4 514.4 L1700.2 560.3 M1710.4 514.0 L1712.2 559.8 M1722.2 513.5 L1724.3 559.3 M1734.2 513.1 L1736.3 558.6 M1746.2 512.7 L1748.3 557.9 M1758.2 512.3 L1760.2 557.3 M1770.4 511.9 L1772.0 556.6 M1782.4 511.4 L1784.0 556.3 M1794.4 510.9 L1796.0 555.9 M1806.4 510.4 L1808.0 555.6 " stroke="#e6e600" stroke-opacity="0.9" stroke-width="1" fill="none"/>
<path d="M776.2 492.6 L775.2 543.1 M788.2 492.9 L787.2 543.3 M800.5 493.3 L798.9 543.4 M812.5 493.9 L810.9 543.6 M824.5 494.4 L822.9 543.8 M836.5 495.0 L834.9 544.0 M848.4 495.5 L846.9 544.3 M860.4 496.0 L858.9 544.5 M872.4 496.6 L870.9 544.7 M884.4 497.1 L882.9 545.0 M896.8 497.8 L894.4 545.3 M908.8 498.4 L906.4 545.8 M920.8 499.1 L918.4 546.4 M932.8 499.8 L930.4 546.9 M944.8 500.4 L942.4 547.4 M956.7 501.1 L954.4 548.0 M968.7 501.8 L966.4 548.5 M980.6 502.4 L978.5 549.0 M992.6 503.0 L990.5 549.6 M1004.6 503.5 L1002.4 550.1 M1016.6 504.0 L1014.4 550.7 M1028.5 504.5 L1026.4 551.3 M1040.5 505.1 L1038.4 551.8 M1052.5 505.6 L1050.4 552.4 M1064.5 506.1 L1062.4 552.9 M1076.5 506.7 L1074.4 553.5 M1088.5 507.2 L1086.4 554.1 M1100.3 507.7 L1098.6 554.6 M1112.2 508.1 L1110.6 555.0 M1124.2 508.6 L1122.6 555.4 M1136.2 509.0 L1134.6 555.8 M1148.2 509.4 L1146.6 556.2 M1160.2 509.9 L1158.6 556.6 M1172.2 510.3 L1170.6 557.0 M1183.8 510.7 L1182.9 557.4 M1195.8 510.9 L1194.9 557.6 M1207.8 511.2 L1206.9 557.8 M1219.8 511.4 L1218.9 558.1 M1231.8 511.7 L1230.9 558.3 M1243.8 511.9 L1242.9 558.5 M1255.8 512.2 L1254.9 558.8 M1267.8 512.4 L1266.9 559.0 M1279.8 512.7 L1278.9 559.2 M1291.8 512.9 L1290.9 559.5 M1303.8 513.2 L1302.9 559.7 M1315.8 513.5 L1314.9 559.9 M1327.8 513.7 L1326.9 560.2 M1339.8 514.0 L1338.9 560.4 M1351.8 514.2 L1350.9 560.6 M1363.8 514.5 L1362.9 560.9 M1375.8 514.7 L1374.8 561.1 M1387.5 514.9 L1387.1 561.2 " transform="translate(2.7 0)" stroke="#d8ff00" stroke-opacity="0.62" stroke-width="0.8" fill="none"/>
<path d="M1399.5 515.0 L1399.1 561.3 M1411.5 515.1 L1411.1 561.4 M1423.5 515.2 L1423.1 561.4 M1435.5 515.3 L1435.1 561.5 M1447.5 515.4 L1447.1 561.6 M1459.5 515.5 L1459.1 561.7 M1471.5 515.6 L1471.1 561.7 M1483.5 515.7 L1483.1 561.8 M1495.5 515.8 L1495.1 561.9 M1507.5 515.9 L1507.1 561.9 M1519.5 516.0 L1519.1 562.0 M1531.5 516.2 L1531.1 562.1 M1543.5 516.3 L1543.1 562.1 M1555.5 516.4 L1555.1 562.2 M1567.4 516.5 L1567.3 562.3 M1579.1 516.4 L1579.5 562.2 M1591.1 516.3 L1591.5 562.1 M1603.1 516.2 L1603.5 562.0 M1615.1 516.0 L1615.5 561.9 M1627.1 515.9 L1627.5 561.8 M1639.1 515.8 L1639.5 561.7 M1651.1 515.7 L1651.5 561.6 M1663.1 515.6 L1663.5 561.5 M1674.4 515.3 L1676.2 561.2 M1686.4 514.9 L1688.2 560.7 M1698.4 514.4 L1700.2 560.3 " transform="translate(2.7 0)" stroke="#b8c800" stroke-opacity="0.45" stroke-width="0.9" fill="none"/>
<path d="M1816.4 509.5 L1817.9 555.8" stroke="#ffff00" stroke-width="1.4"/>
<polyline points="548.0,558.8 584.2,542.5 629.2,528.8 679.2,521.2 726.8,518.5 774.2,518.0 821.8,518.8 870.5,520.5 918.0,522.5 965.5,525.0 1014.0,527.8 1062.5,530.5 1110.0,533.0 1158.8,535.0 1207.5,536.2 1255.0,537.5 1303.8,538.2 1351.2,538.8 1400.0,539.2 1448.8,539.5 1497.5,540.0 1545.0,540.0 1593.8,540.0 1641.2,540.0 1690.0,539.5 1738.8,538.0 1786.2,535.8 1831.2,533.8 1843.5,533.2 1866.0,533.0 1880.0,533.6 1893.0,534.2" fill="none" stroke="#565656" stroke-width="1.8"/>
<polyline points="1400.0,539.2 1448.8,539.5 1497.5,540.0 1545.0,540.0 1593.8,540.0 1641.2,540.0 1690.0,539.5 1738.8,538.0 1786.2,535.8 1831.2,533.8 1843.5,533.2 1866.0,533.0 1880.0,533.6 1893.0,534.2" fill="none" stroke="#8a8a8a" stroke-width="1.2"/>
<polyline points="1400.0,539.2 1448.8,539.5 1497.5,540.0 1545.0,540.0 1593.8,540.0 1641.2,540.0 1690.0,539.5 1738.8,538.0 1786.2,535.8 1831.2,533.8 1843.5,533.2 1866.0,533.0 1880.0,533.6 1893.0,534.2" fill="none" stroke="#f0f0f0" stroke-opacity="0.8" stroke-width="0.9" stroke-dasharray="3 21" stroke-dashoffset="-10"/>
<path d="M553.5 554.1 L555.3 556.3 L553.5 558.5 Z M564.4 549.2 L566.2 551.4 L564.4 553.6 Z M575.4 544.3 L577.2 546.5 L575.4 548.7 Z M586.4 539.6 L588.2 541.8 L586.4 544.0 Z M597.9 536.1 L599.7 538.3 L597.9 540.5 Z M609.4 532.6 L611.2 534.8 L609.4 537.0 Z M620.9 529.1 L622.7 531.3 L620.9 533.5 Z M632.4 526.1 L634.2 528.3 L632.4 530.5 Z M644.3 524.3 L646.1 526.5 L644.3 528.7 Z M656.2 522.5 L658.0 524.7 L656.2 526.9 Z M668.0 520.7 L669.8 522.9 L668.0 525.1 Z M679.9 519.0 L681.7 521.2 L679.9 523.4 Z M691.9 518.3 L693.7 520.5 L691.9 522.7 Z M703.9 517.6 L705.7 519.8 L703.9 522.0 Z M715.8 516.9 L717.6 519.1 L715.8 521.3 Z M727.8 516.3 L729.6 518.5 L727.8 520.7 Z M739.8 516.2 L741.6 518.4 L739.8 520.6 Z M751.8 516.0 L753.6 518.2 L751.8 520.4 Z M763.8 515.9 L765.6 518.1 L763.8 520.3 Z M775.8 515.8 L777.6 518.0 L775.8 520.2 Z M787.8 516.0 L789.6 518.2 L787.8 520.4 Z M799.8 516.2 L801.6 518.4 L799.8 520.6 Z M811.8 516.4 L813.6 518.6 L811.8 520.8 Z M823.8 516.6 L825.6 518.8 L823.8 521.0 Z M835.8 517.1 L837.6 519.3 L835.8 521.5 Z M847.8 517.5 L849.6 519.7 L847.8 521.9 Z M859.8 517.9 L861.6 520.1 L859.8 522.3 Z M871.8 518.4 L873.6 520.6 L871.8 522.8 Z M883.8 518.9 L885.6 521.1 L883.8 523.3 Z M895.8 519.4 L897.6 521.6 L895.8 523.8 Z M907.8 519.9 L909.6 522.1 L907.8 524.3 Z M919.7 520.4 L921.5 522.6 L919.7 524.8 Z M931.7 521.0 L933.5 523.2 L931.7 525.4 Z M943.7 521.7 L945.5 523.9 L943.7 526.1 Z M955.7 522.3 L957.5 524.5 L955.7 526.7 Z M967.7 522.9 L969.5 525.1 L967.7 527.3 Z M979.7 523.6 L981.5 525.8 L979.7 528.0 Z M991.6 524.3 L993.4 526.5 L991.6 528.7 Z M1003.6 525.0 L1005.4 527.2 L1003.6 529.4 Z M1015.6 525.6 L1017.4 527.8 L1015.6 530.0 Z M1027.6 526.3 L1029.4 528.5 L1027.6 530.7 Z M1039.6 527.0 L1041.4 529.2 L1039.6 531.4 Z M1051.5 527.7 L1053.3 529.9 L1051.5 532.1 Z M1063.5 528.4 L1065.3 530.6 L1063.5 532.8 Z M1075.5 529.0 L1077.3 531.2 L1075.5 533.4 Z M1087.5 529.6 L1089.3 531.8 L1087.5 534.0 Z M1099.5 530.2 L1101.3 532.4 L1099.5 534.6 Z M1111.5 530.9 L1113.3 533.1 L1111.5 535.3 Z M1123.5 531.4 L1125.3 533.6 L1123.5 535.8 Z M1135.4 531.8 L1137.2 534.0 L1135.4 536.2 Z M1147.4 532.3 L1149.2 534.5 L1147.4 536.7 Z M1159.4 532.8 L1161.2 535.0 L1159.4 537.2 Z M1171.4 533.1 L1173.2 535.3 L1171.4 537.5 Z M1183.4 533.4 L1185.2 535.6 L1183.4 537.8 Z M1195.4 533.7 L1197.2 535.9 L1195.4 538.1 Z M1207.4 534.0 L1209.2 536.2 L1207.4 538.4 Z M1219.4 534.4 L1221.2 536.6 L1219.4 538.8 Z M1231.4 534.7 L1233.2 536.9 L1231.4 539.1 Z M1243.4 535.0 L1245.2 537.2 L1243.4 539.4 Z M1255.4 535.3 L1257.2 537.5 L1255.4 539.7 Z M1267.4 535.5 L1269.2 537.7 L1267.4 539.9 Z M1279.4 535.7 L1281.2 537.9 L1279.4 540.1 Z M1291.4 535.9 L1293.2 538.1 L1291.4 540.3 Z M1303.4 536.0 L1305.2 538.2 L1303.4 540.4 Z M1315.4 536.2 L1317.2 538.4 L1315.4 540.6 Z M1327.4 536.3 L1329.2 538.5 L1327.4 540.7 Z M1339.4 536.4 L1341.2 538.6 L1339.4 540.8 Z M1351.4 536.6 L1353.2 538.8 L1351.4 541.0 Z M1363.4 536.7 L1365.2 538.9 L1363.4 541.1 Z M1375.4 536.8 L1377.2 539.0 L1375.4 541.2 Z M1387.4 536.9 L1389.2 539.1 L1387.4 541.3 Z M1399.4 537.0 L1401.2 539.2 L1399.4 541.4 Z M1411.4 537.1 L1413.2 539.3 L1411.4 541.5 Z M1423.4 537.2 L1425.2 539.4 L1423.4 541.6 Z M1435.4 537.2 L1437.2 539.4 L1435.4 541.6 Z M1447.4 537.3 L1449.2 539.5 L1447.4 541.7 Z M1459.4 537.4 L1461.2 539.6 L1459.4 541.8 Z M1471.4 537.5 L1473.2 539.7 L1471.4 541.9 Z M1483.4 537.7 L1485.2 539.9 L1483.4 542.1 Z M1495.4 537.8 L1497.2 540.0 L1495.4 542.2 Z M1507.4 537.8 L1509.2 540.0 L1507.4 542.2 Z M1519.4 537.8 L1521.2 540.0 L1519.4 542.2 Z M1531.4 537.8 L1533.2 540.0 L1531.4 542.2 Z M1543.4 537.8 L1545.2 540.0 L1543.4 542.2 Z M1555.4 537.8 L1557.2 540.0 L1555.4 542.2 Z M1567.4 537.8 L1569.2 540.0 L1567.4 542.2 Z M1579.4 537.8 L1581.2 540.0 L1579.4 542.2 Z M1591.4 537.8 L1593.2 540.0 L1591.4 542.2 Z M1603.4 537.8 L1605.2 540.0 L1603.4 542.2 Z M1615.4 537.8 L1617.2 540.0 L1615.4 542.2 Z M1627.4 537.8 L1629.2 540.0 L1627.4 542.2 Z M1639.4 537.8 L1641.2 540.0 L1639.4 542.2 Z M1651.4 537.7 L1653.2 539.9 L1651.4 542.1 Z M1663.4 537.6 L1665.2 539.8 L1663.4 542.0 Z M1675.4 537.5 L1677.2 539.7 L1675.4 541.9 Z M1687.4 537.3 L1689.2 539.5 L1687.4 541.7 Z M1699.4 537.0 L1701.2 539.2 L1699.4 541.4 Z M1711.4 536.6 L1713.2 538.8 L1711.4 541.0 Z M1723.4 536.3 L1725.2 538.5 L1723.4 540.7 Z M1735.4 535.9 L1737.2 538.1 L1735.4 540.3 Z M1747.3 535.4 L1749.1 537.6 L1747.3 539.8 Z M1759.3 534.8 L1761.1 537.0 L1759.3 539.2 Z M1771.3 534.3 L1773.1 536.5 L1771.3 538.7 Z M1783.3 533.7 L1785.1 535.9 L1783.3 538.1 Z M1795.3 533.1 L1797.1 535.3 L1795.3 537.5 Z M1807.3 532.6 L1809.1 534.8 L1807.3 537.0 Z M1819.3 532.1 L1821.1 534.3 L1819.3 536.5 Z M1831.3 531.5 L1833.1 533.7 L1831.3 535.9 Z M1843.2 531.0 L1845.0 533.2 L1843.2 535.4 Z M1855.2 530.9 L1857.0 533.1 L1855.2 535.3 Z M1867.2 530.9 L1869.0 533.1 L1867.2 535.3 Z M1879.2 531.4 L1881.0 533.6 L1879.2 535.8 Z M1891.2 531.9 L1893.0 534.1 L1891.2 536.3 Z " fill="#4c4c4c"/>
<g transform="translate(584.2 542.5) rotate(-20.3)"><rect x="-5.6" y="-3.3" width="10" height="6.6" fill="#5c5c5c" stroke="#3c3c3c" stroke-width="0.6"/><rect x="-3" y="-2.1" width="5.6" height="4.2" fill="#858585"/><rect x="-4.6" y="-3" width="1" height="6" fill="#9a9a60" fill-opacity="0.7"/><path d="M4.4 -6.2 L7 0 L4.4 6.2 Z" fill="#2e2e2e"/></g>
<g transform="translate(629.2 528.8) rotate(-12.6)"><rect x="-5.6" y="-3.3" width="10" height="6.6" fill="#5c5c5c" stroke="#3c3c3c" stroke-width="0.6"/><rect x="-3" y="-2.1" width="5.6" height="4.2" fill="#858585"/><rect x="-4.6" y="-3" width="1" height="6" fill="#9a9a60" fill-opacity="0.7"/><path d="M4.4 -6.2 L7 0 L4.4 6.2 Z" fill="#2e2e2e"/></g>
<g transform="translate(679.2 521.2) rotate(-6.0)"><rect x="-5.6" y="-3.3" width="10" height="6.6" fill="#5c5c5c" stroke="#3c3c3c" stroke-width="0.6"/><rect x="-3" y="-2.1" width="5.6" height="4.2" fill="#858585"/><rect x="-4.6" y="-3" width="1" height="6" fill="#9a9a60" fill-opacity="0.7"/><path d="M4.4 -6.2 L7 0 L4.4 6.2 Z" fill="#2e2e2e"/></g>
<g transform="translate(726.8 518.5) rotate(-2.0)"><rect x="-5.6" y="-3.3" width="10" height="6.6" fill="#5c5c5c" stroke="#3c3c3c" stroke-width="0.6"/><rect x="-3" y="-2.1" width="5.6" height="4.2" fill="#858585"/><rect x="-4.6" y="-3" width="1" height="6" fill="#9a9a60" fill-opacity="0.7"/><path d="M4.4 -6.2 L7 0 L4.4 6.2 Z" fill="#2e2e2e"/></g>
<g transform="translate(774.2 518.0) rotate(0.2)"><rect x="-5.6" y="-3.3" width="10" height="6.6" fill="#5c5c5c" stroke="#3c3c3c" stroke-width="0.6"/><rect x="-3" y="-2.1" width="5.6" height="4.2" fill="#858585"/><rect x="-4.6" y="-3" width="1" height="6" fill="#9a9a60" fill-opacity="0.7"/><path d="M4.4 -6.2 L7 0 L4.4 6.2 Z" fill="#2e2e2e"/></g>
<g transform="translate(821.8 518.8) rotate(1.5)"><rect x="-5.6" y="-3.3" width="10" height="6.6" fill="#5c5c5c" stroke="#3c3c3c" stroke-width="0.6"/><rect x="-3" y="-2.1" width="5.6" height="4.2" fill="#858585"/><rect x="-4.6" y="-3" width="1" height="6" fill="#9a9a60" fill-opacity="0.7"/><path d="M4.4 -6.2 L7 0 L4.4 6.2 Z" fill="#2e2e2e"/></g>
<g transform="translate(870.5 520.5) rotate(2.2)"><rect x="-5.6" y="-3.3" width="10" height="6.6" fill="#5c5c5c" stroke="#3c3c3c" stroke-width="0.6"/><rect x="-3" y="-2.1" width="5.6" height="4.2" fill="#858585"/><rect x="-4.6" y="-3" width="1" height="6" fill="#9a9a60" fill-opacity="0.7"/><path d="M4.4 -6.2 L7 0 L4.4 6.2 Z" fill="#2e2e2e"/></g>
<g transform="translate(918.0 522.5) rotate(2.7)"><rect x="-5.6" y="-3.3" width="10" height="6.6" fill="#5c5c5c" stroke="#3c3c3c" stroke-width="0.6"/><rect x="-3" y="-2.1" width="5.6" height="4.2" fill="#858585"/><rect x="-4.6" y="-3" width="1" height="6" fill="#9a9a60" fill-opacity="0.7"/><path d="M4.4 -6.2 L7 0 L4.4 6.2 Z" fill="#2e2e2e"/></g>
<g transform="translate(965.5 525.0) rotate(3.1)"><rect x="-5.6" y="-3.3" width="10" height="6.6" fill="#5c5c5c" stroke="#3c3c3c" stroke-width="0.6"/><rect x="-3" y="-2.1" width="5.6" height="4.2" fill="#858585"/><rect x="-4.6" y="-3" width="1" height="6" fill="#9a9a60" fill-opacity="0.7"/><path d="M4.4 -6.2 L7 0 L4.4 6.2 Z" fill="#2e2e2e"/></g>
<g transform="translate(1014.0 527.8) rotate(3.2)"><rect x="-5.6" y="-3.3" width="10" height="6.6" fill="#5c5c5c" stroke="#3c3c3c" stroke-width="0.6"/><rect x="-3" y="-2.1" width="5.6" height="4.2" fill="#858585"/><rect x="-4.6" y="-3" width="1" height="6" fill="#9a9a60" fill-opacity="0.7"/><path d="M4.4 -6.2 L7 0 L4.4 6.2 Z" fill="#2e2e2e"/></g>
<g transform="translate(1062.5 530.5) rotate(3.1)"><rect x="-5.6" y="-3.3" width="10" height="6.6" fill="#5c5c5c" stroke="#3c3c3c" stroke-width="0.6"/><rect x="-3" y="-2.1" width="5.6" height="4.2" fill="#858585"/><rect x="-4.6" y="-3" width="1" height="6" fill="#9a9a60" fill-opacity="0.7"/><path d="M4.4 -6.2 L7 0 L4.4 6.2 Z" fill="#2e2e2e"/></g>
<g transform="translate(1110.0 533.0) rotate(2.7)"><rect x="-5.6" y="-3.3" width="10" height="6.6" fill="#5c5c5c" stroke="#3c3c3c" stroke-width="0.6"/><rect x="-3" y="-2.1" width="5.6" height="4.2" fill="#858585"/><rect x="-4.6" y="-3" width="1" height="6" fill="#9a9a60" fill-opacity="0.7"/><path d="M4.4 -6.2 L7 0 L4.4 6.2 Z" fill="#2e2e2e"/></g>
<g transform="translate(1158.8 535.0) rotate(1.9)"><rect x="-5.6" y="-3.3" width="10" height="6.6" fill="#5c5c5c" stroke="#3c3c3c" stroke-width="0.6"/><rect x="-3" y="-2.1" width="5.6" height="4.2" fill="#858585"/><rect x="-4.6" y="-3" width="1" height="6" fill="#9a9a60" fill-opacity="0.7"/><path d="M4.4 -6.2 L7 0 L4.4 6.2 Z" fill="#2e2e2e"/></g>
<g transform="translate(1207.5 536.2) rotate(1.5)"><rect x="-5.6" y="-3.3" width="10" height="6.6" fill="#5c5c5c" stroke="#3c3c3c" stroke-width="0.6"/><rect x="-3" y="-2.1" width="5.6" height="4.2" fill="#858585"/><rect x="-4.6" y="-3" width="1" height="6" fill="#9a9a60" fill-opacity="0.7"/><path d="M4.4 -6.2 L7 0 L4.4 6.2 Z" fill="#2e2e2e"/></g>
<g transform="translate(1255.0 537.5) rotate(1.2)"><rect x="-5.6" y="-3.3" width="10" height="6.6" fill="#5c5c5c" stroke="#3c3c3c" stroke-width="0.6"/><rect x="-3" y="-2.1" width="5.6" height="4.2" fill="#858585"/><rect x="-4.6" y="-3" width="1" height="6" fill="#9a9a60" fill-opacity="0.7"/><path d="M4.4 -6.2 L7 0 L4.4 6.2 Z" fill="#2e2e2e"/></g>
<g transform="translate(1303.8 538.2) rotate(0.7)"><rect x="-5.6" y="-3.3" width="10" height="6.6" fill="#5c5c5c" stroke="#3c3c3c" stroke-width="0.6"/><rect x="-3" y="-2.1" width="5.6" height="4.2" fill="#858585"/><rect x="-4.6" y="-3" width="1" height="6" fill="#9a9a60" fill-opacity="0.7"/><path d="M4.4 -6.2 L7 0 L4.4 6.2 Z" fill="#2e2e2e"/></g>
<g transform="translate(1351.2 538.8) rotate(0.6)"><rect x="-5.6" y="-3.3" width="10" height="6.6" fill="#5c5c5c" stroke="#3c3c3c" stroke-width="0.6"/><rect x="-3" y="-2.1" width="5.6" height="4.2" fill="#858585"/><rect x="-4.6" y="-3" width="1" height="6" fill="#9a9a60" fill-opacity="0.7"/><path d="M4.4 -6.2 L7 0 L4.4 6.2 Z" fill="#2e2e2e"/></g>
<g transform="translate(1400.0 539.2) rotate(0.4)"><rect x="-5.6" y="-3.3" width="10" height="6.6" fill="#5c5c5c" stroke="#3c3c3c" stroke-width="0.6"/><rect x="-3" y="-2.1" width="5.6" height="4.2" fill="#858585"/><rect x="-4.6" y="-3" width="1" height="6" fill="#9a9a60" fill-opacity="0.7"/><path d="M4.4 -6.2 L7 0 L4.4 6.2 Z" fill="#2e2e2e"/></g>
<g transform="translate(1448.8 539.5) rotate(0.4)"><rect x="-5.6" y="-3.3" width="10" height="6.6" fill="#5c5c5c" stroke="#3c3c3c" stroke-width="0.6"/><rect x="-3" y="-2.1" width="5.6" height="4.2" fill="#858585"/><rect x="-4.6" y="-3" width="1" height="6" fill="#9a9a60" fill-opacity="0.7"/><path d="M4.4 -6.2 L7 0 L4.4 6.2 Z" fill="#2e2e2e"/></g>
<g transform="translate(1497.5 540.0) rotate(0.3)"><rect x="-5.6" y="-3.3" width="10" height="6.6" fill="#5c5c5c" stroke="#3c3c3c" stroke-width="0.6"/><rect x="-3" y="-2.1" width="5.6" height="4.2" fill="#858585"/><rect x="-4.6" y="-3" width="1" height="6" fill="#9a9a60" fill-opacity="0.7"/><path d="M4.4 -6.2 L7 0 L4.4 6.2 Z" fill="#2e2e2e"/></g>
<g transform="translate(1545.0 540.0) rotate(0.0)"><rect x="-5.6" y="-3.3" width="10" height="6.6" fill="#5c5c5c" stroke="#3c3c3c" stroke-width="0.6"/><rect x="-3" y="-2.1" width="5.6" height="4.2" fill="#858585"/><rect x="-4.6" y="-3" width="1" height="6" fill="#9a9a60" fill-opacity="0.7"/><path d="M4.4 -6.2 L7 0 L4.4 6.2 Z" fill="#2e2e2e"/></g>
<g transform="translate(1593.8 540.0) rotate(0.0)"><rect x="-5.6" y="-3.3" width="10" height="6.6" fill="#5c5c5c" stroke="#3c3c3c" stroke-width="0.6"/><rect x="-3" y="-2.1" width="5.6" height="4.2" fill="#858585"/><rect x="-4.6" y="-3" width="1" height="6" fill="#9a9a60" fill-opacity="0.7"/><path d="M4.4 -6.2 L7 0 L4.4 6.2 Z" fill="#2e2e2e"/></g>
<g transform="translate(1641.2 540.0) rotate(-0.3)"><rect x="-5.6" y="-3.3" width="10" height="6.6" fill="#5c5c5c" stroke="#3c3c3c" stroke-width="0.6"/><rect x="-3" y="-2.1" width="5.6" height="4.2" fill="#858585"/><rect x="-4.6" y="-3" width="1" height="6" fill="#9a9a60" fill-opacity="0.7"/><path d="M4.4 -6.2 L7 0 L4.4 6.2 Z" fill="#2e2e2e"/></g>
<g transform="translate(1690.0 539.5) rotate(-1.2)"><rect x="-5.6" y="-3.3" width="10" height="6.6" fill="#5c5c5c" stroke="#3c3c3c" stroke-width="0.6"/><rect x="-3" y="-2.1" width="5.6" height="4.2" fill="#858585"/><rect x="-4.6" y="-3" width="1" height="6" fill="#9a9a60" fill-opacity="0.7"/><path d="M4.4 -6.2 L7 0 L4.4 6.2 Z" fill="#2e2e2e"/></g>
<g transform="translate(1738.8 538.0) rotate(-2.2)"><rect x="-5.6" y="-3.3" width="10" height="6.6" fill="#5c5c5c" stroke="#3c3c3c" stroke-width="0.6"/><rect x="-3" y="-2.1" width="5.6" height="4.2" fill="#858585"/><rect x="-4.6" y="-3" width="1" height="6" fill="#9a9a60" fill-opacity="0.7"/><path d="M4.4 -6.2 L7 0 L4.4 6.2 Z" fill="#2e2e2e"/></g>
<g transform="translate(1786.2 535.8) rotate(-2.6)"><rect x="-5.6" y="-3.3" width="10" height="6.6" fill="#5c5c5c" stroke="#3c3c3c" stroke-width="0.6"/><rect x="-3" y="-2.1" width="5.6" height="4.2" fill="#858585"/><rect x="-4.6" y="-3" width="1" height="6" fill="#9a9a60" fill-opacity="0.7"/><path d="M4.4 -6.2 L7 0 L4.4 6.2 Z" fill="#2e2e2e"/></g>
<g transform="translate(1831.2 533.8) rotate(-2.6)"><rect x="-5.6" y="-3.3" width="10" height="6.6" fill="#5c5c5c" stroke="#3c3c3c" stroke-width="0.6"/><rect x="-3" y="-2.1" width="5.6" height="4.2" fill="#858585"/><rect x="-4.6" y="-3" width="1" height="6" fill="#9a9a60" fill-opacity="0.7"/><path d="M4.4 -6.2 L7 0 L4.4 6.2 Z" fill="#2e2e2e"/></g>
<g transform="translate(1843.5 533.2) rotate(-1.2)"><rect x="-5.6" y="-3.3" width="10" height="6.6" fill="#5c5c5c" stroke="#3c3c3c" stroke-width="0.6"/><rect x="-3" y="-2.1" width="5.6" height="4.2" fill="#858585"/><rect x="-4.6" y="-3" width="1" height="6" fill="#9a9a60" fill-opacity="0.7"/><path d="M4.4 -6.2 L7 0 L4.4 6.2 Z" fill="#2e2e2e"/></g>
<g transform="translate(1866.0 533.0) rotate(0.6)"><rect x="-5.6" y="-3.3" width="10" height="6.6" fill="#5c5c5c" stroke="#3c3c3c" stroke-width="0.6"/><rect x="-3" y="-2.1" width="5.6" height="4.2" fill="#858585"/><rect x="-4.6" y="-3" width="1" height="6" fill="#9a9a60" fill-opacity="0.7"/><path d="M4.4 -6.2 L7 0 L4.4 6.2 Z" fill="#2e2e2e"/></g>
<g transform="translate(1880.0 533.6) rotate(2.5)"><rect x="-5.6" y="-3.3" width="10" height="6.6" fill="#5c5c5c" stroke="#3c3c3c" stroke-width="0.6"/><rect x="-3" y="-2.1" width="5.6" height="4.2" fill="#858585"/><rect x="-4.6" y="-3" width="1" height="6" fill="#9a9a60" fill-opacity="0.7"/><path d="M4.4 -6.2 L7 0 L4.4 6.2 Z" fill="#2e2e2e"/></g>
<path d="M665 520.4 L700 520.6 L760 522 L806 523.6" stroke="#f0f0f0" stroke-opacity="0.75" stroke-width="0.9" fill="none"/>
<defs><linearGradient id="car" gradientUnits="userSpaceOnUse" x1="642" y1="0" x2="757" y2="0"><stop offset="0" stop-color="#8a5a50" stop-opacity="0.35"/><stop offset="0.15" stop-color="#a06258" stop-opacity="0.4"/><stop offset="0.17" stop-color="#ffffff" stop-opacity="0.36"/><stop offset="0.4" stop-color="#ffffff" stop-opacity="0.42"/><stop offset="0.545" stop-color="#ffffff" stop-opacity="0.45"/><stop offset="0.555" stop-color="#7a8a30" stop-opacity="0.5"/><stop offset="0.74" stop-color="#6a9a38" stop-opacity="0.45"/><stop offset="0.76" stop-color="#ffffff" stop-opacity="0.48"/><stop offset="1" stop-color="#ffffff" stop-opacity="0.52"/></linearGradient></defs>
<path d="M655 498.2 H733 C748 498.2 756.6 508.5 756.6 520.4 C756.6 532.3 748 542.6 733 542.6 H655 C646.5 542.6 642 537 642 528.5 V512.3 C642 503.8 646.5 498.2 655 498.2 Z" fill="url(#car)" stroke="#d8d8c0" stroke-opacity="0.6" stroke-width="1"/>
<path d="M661 503.5 H704 L726 499.8 M661 537.3 H704 L726 541" fill="none" stroke="#fff" stroke-opacity="0.3" stroke-width="1"/>
<path d="M650 503 Q645.5 520.4 650 538" fill="none" stroke="#fff" stroke-opacity="0.25" stroke-width="1.2"/>
<path d="M744 502.5 Q753.5 520.4 744 538.3" fill="none" stroke="#fff" stroke-opacity="0.3" stroke-width="1"/>
<path d="M724 499.2 H741 V503.4 H724 Z M724 541.6 H741 V537.4 H724 Z" fill="#70704a" fill-opacity="0.55"/>
<path fill="#fff" fill-rule="evenodd" d="M676 131.8 a63.9 63.9 0 1 0 0.01 0 Z M627.9 178.5 A51 51 0 0 1 724.1 178.5 Q725.2 182.6 721 183 L707.5 183 L702 180.5 L651 180.5 L645.5 183 L632 183 Q626.8 182.6 627.9 178.5 Z M626.5 206.4 Q625.8 203.3 629 203.3 L644.5 203.3 L665.9 223.5 L665.9 241.5 Q665.9 246.2 661.6 245.1 A51 51 0 0 1 626.5 206.4 Z M725.5 206.4 Q726.2 203.3 723 203.3 L707.5 203.3 L686.1 223.5 L686.1 241.5 Q686.1 246.2 690.4 245.1 A51 51 0 0 0 725.5 206.4 Z"/>
<text x="675.7" y="203" text-anchor="middle" font-weight="bold" font-size="19.4" fill="#14fbec" style="font-kerning:none">0.0deg</text>
<text x="866.8" y="201" text-anchor="middle" font-weight="bold" font-size="18.5" fill="#14fbec" style="font-kerning:none">0.00km/h</text>
<path d="M826.0 243.7 A63.6 63.6 0 1 1 910.2 243.7" fill="none" stroke="#fff" stroke-width="1.6"/>
<path d="M857.9 207.3 A15.8 15.8 0 1 1 875.6 207.6" fill="none" stroke="#fff" stroke-width="1.6"/>
<path d="M910.2 243.7 L875.4 206.4" stroke="#fff" stroke-width="1.6"/>
<path d="M827.4 243.5 L863.2 201" stroke="#fff" stroke-width="4.6"/>
<text x="869.8" y="229.6" text-anchor="middle" font-weight="bold" font-size="9.6" fill="#e8e8e8">limited</text>
<text x="870" y="241.6" text-anchor="middle" font-weight="bold" font-size="9.6" fill="#e8e8e8">72km/h</text>
<g fill="none" stroke="#fff" stroke-width="1.4" stroke-dasharray="3.2 2.2"><path d="M646.5 307 L697 269.6 L697 294 L749 294 L749 320 L697 320 L697 345 Z"/><path d="M901.6 307 L851 269.6 L851 294 L799 294 L799 320 L851 320 L851 345 Z"/></g>
<polygon points="1376.3,424.0 1467.0,372.0 1490.5,410.6 1399.1,463.4" fill="none" stroke="#1c66b8" stroke-width="1.1"/>
<polyline points="1460.0,373.0 1450.0,377.5 1436.0,387.0 1420.0,398.3 1400.0,413.0 1381.0,427.6 1387.0,439.0 1397.0,455.0 1405.0,465.0" fill="none" stroke="#cfcfcf" stroke-width="2.8" stroke-linejoin="round"/>
<g fill="none" stroke="#7ce27c" stroke-width="1.05"><circle cx="1438.0" cy="413.3" r="3.9"/><circle cx="1441.9" cy="411.1" r="3.9"/><circle cx="1445.9" cy="408.8" r="3.9"/><circle cx="1449.8" cy="406.6" r="3.9"/><circle cx="1453.8" cy="404.3" r="3.9"/><circle cx="1457.7" cy="402.1" r="3.9"/><circle cx="1461.7" cy="399.8" r="3.9"/><circle cx="1465.6" cy="397.6" r="3.9"/><circle cx="1469.5" cy="395.4" r="3.9"/><circle cx="1473.5" cy="393.1" r="3.9"/><circle cx="1477.4" cy="390.9" r="3.9"/><circle cx="1481.4" cy="388.6" r="3.9"/><circle cx="1485.3" cy="386.4" r="3.9"/><circle cx="1489.3" cy="384.1" r="3.9"/><circle cx="1493.2" cy="381.9" r="3.9"/><circle cx="1497.1" cy="379.7" r="3.9"/><circle cx="1501.1" cy="377.4" r="3.9"/><circle cx="1505.0" cy="375.2" r="3.9"/><circle cx="1509.0" cy="372.9" r="3.9"/><circle cx="1512.9" cy="370.7" r="3.9"/><circle cx="1516.9" cy="368.4" r="3.9"/><circle cx="1520.8" cy="366.2" r="3.9"/></g>
<text transform="translate(1541.8 366.3) rotate(180)" font-size="8.8" fill="#8fea8f">1.000000</text>
<text transform="translate(1428.8 398.2) rotate(180)" font-size="8.5" fill="#1e90ff">-0.0[m/s^2]</text>
<text transform="translate(1427.6 404.5) rotate(180)" font-size="8.5" fill="#1e90ff">1.4[m/s]</text>
<text transform="translate(1433.4 410.8) rotate(180)" font-size="8.5" fill="#1e90ff">8227</text>
<text transform="translate(1443.4 416.8) rotate(180)" font-size="8.5" fill="#1e90ff">CAR</text>
<path d="M1894 68.5 H548.5 V1004.5 H1894" fill="none" stroke="#000" stroke-width="1"/>
</svg>
<div style="left:547px;top:67px;width:1px;height:938px;background:#fff"></div><div style="left:547px;top:67px;width:1348px;height:1px;background:#fff"></div><div style="left:1894px;top:67px;width:1px;height:939px;background:#fff"></div><div style="left:547px;top:1005px;width:1348px;height:1px;background:#fff"></div>
<div class="btn" style="left:3px;top:1017px;width:51px;height:22px;"></div>
<div class="t" style="left:3px;width:51px;text-align:center;top:1022px;">Reset</div>
<div class="t" style="left:60px;top:1021px;"><b>Left-Click:</b> Rotate. <b>Middle-Click:</b> Move X/Y. <b>Right-Click:</b> Zoom. <b>Shift:</b> More options.</div>
<div class="t" style="right:25px;top:1018px">18 fps</div>
<svg style="left:1907px;top:1029px" width="12" height="12" viewBox="0 0 12 12"><g fill="#b8b8b8"><rect x="9" y="0" width="1.4" height="1.4"/><rect x="6" y="3" width="1.4" height="1.4"/><rect x="9" y="3" width="1.4" height="1.4"/><rect x="3" y="6" width="1.4" height="1.4"/><rect x="6" y="6" width="1.4" height="1.4"/><rect x="9" y="6" width="1.4" height="1.4"/><rect x="0" y="9" width="1.4" height="1.4"/><rect x="3" y="9" width="1.4" height="1.4"/><rect x="6" y="9" width="1.4" height="1.4"/><rect x="9" y="9" width="1.4" height="1.4"/></g></svg>
<svg style="left:529px;top:532px" width="5" height="9" viewBox="0 0 5 9"><path d="M4.3 0.9 V8.1 L0.2 4.5 Z" fill="#505050"/></svg>
<div class="" style="left:520px;top:530px;width:1px;height:16px;background-image:repeating-linear-gradient(180deg,#b2b2b2 0 1px,transparent 1px 3px)"></div>
<svg style="left:1909px;top:532px" width="5" height="9" viewBox="0 0 5 9"><path d="M0.4 0.9 V8.1 L4.5 4.5 Z" fill="#505050"/></svg>
<div class="" style="left:1px;top:0px;width:1px;height:1041px;background:#e8f6f6"></div>
<div class="" style="left:1918px;top:0px;width:1px;height:1041px;background:#e8f6f6"></div>
<div class="" style="left:1px;top:1040px;width:1918px;height:1px;background:#e8f6f6"></div>
<div class="" style="left:0px;top:0px;width:1px;height:1042px;background:#ff0000"></div>
<div class="" style="left:1919px;top:0px;width:1px;height:1042px;background:#ff0000"></div>
<div class="" style="left:0px;top:1041px;width:1920px;height:1px;background:#ff0000"></div>
</div></body></html>
